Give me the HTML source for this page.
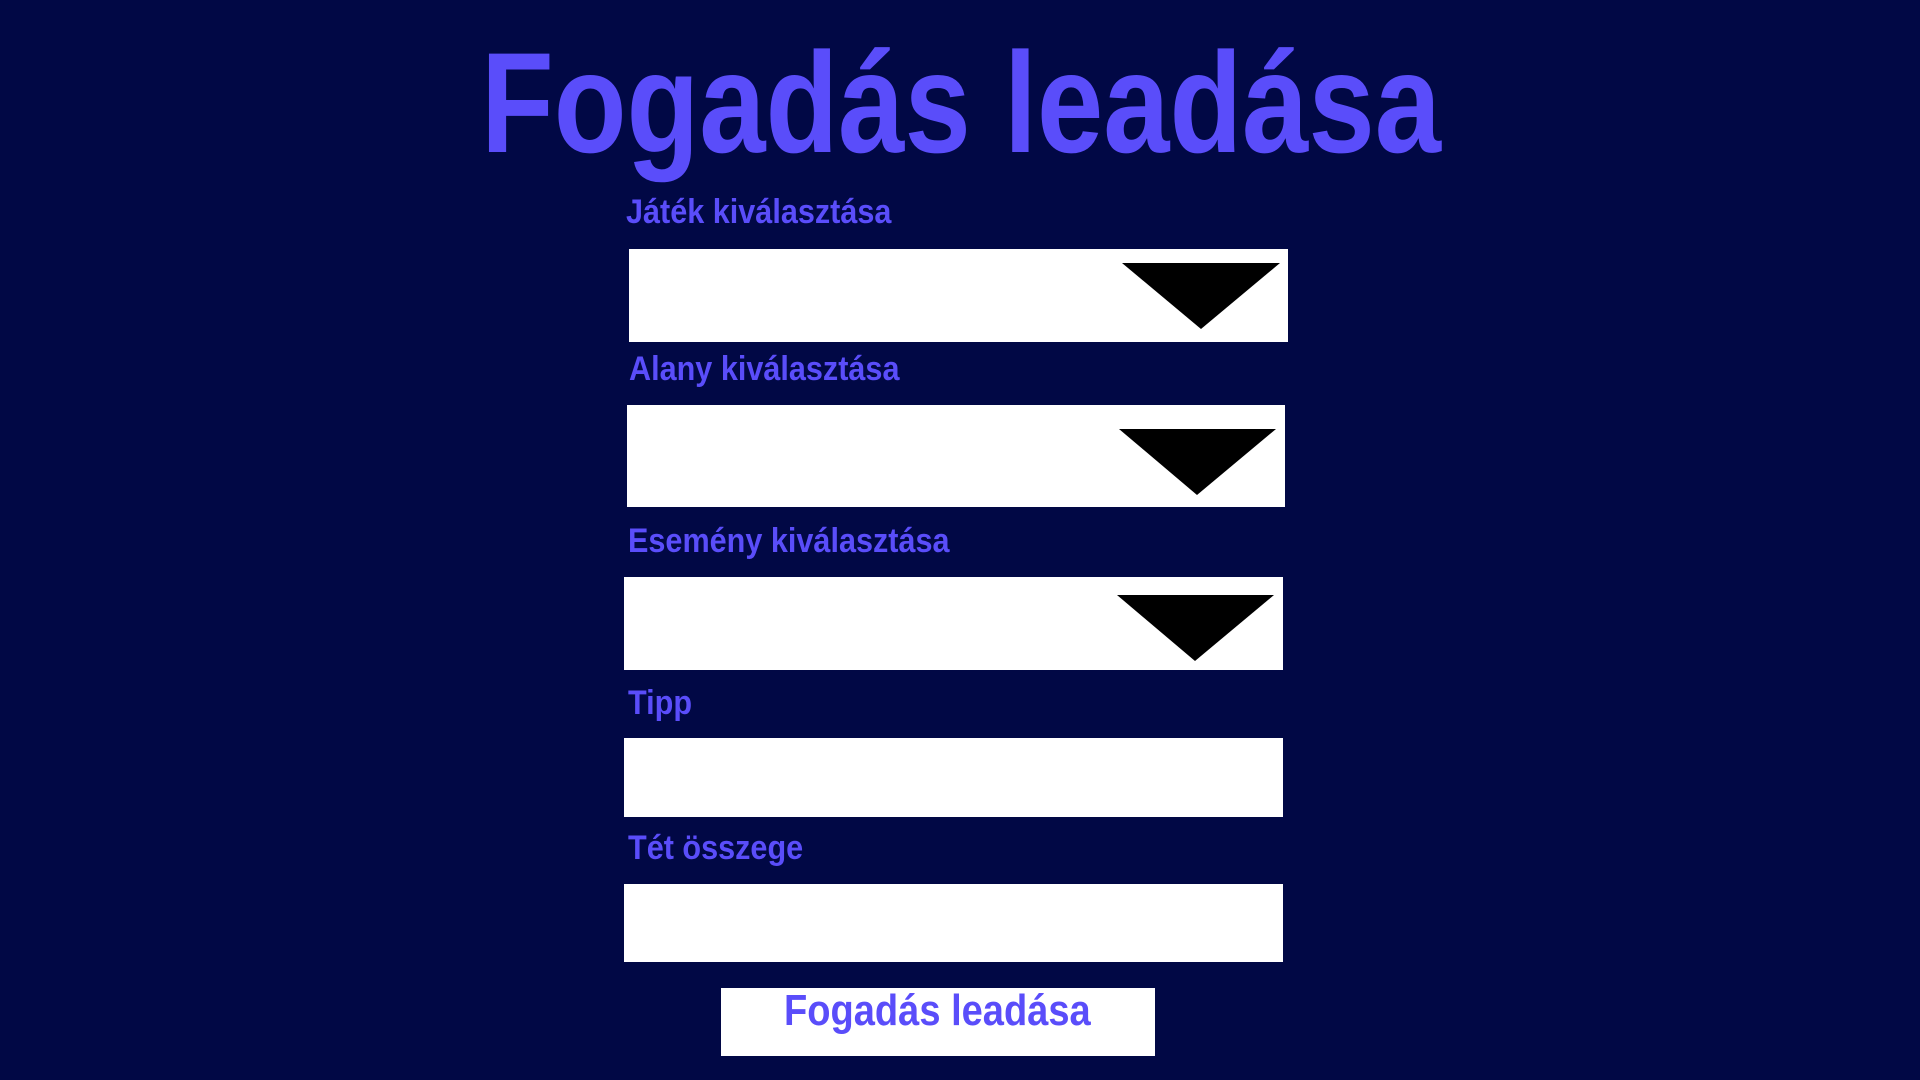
<!DOCTYPE html>
<html><head><meta charset="utf-8"><style>
html,body{margin:0;padding:0;width:1920px;height:1080px;background:#010845;overflow:hidden;font-family:"Liberation Sans",sans-serif;}
.t{position:absolute;color:#5a4dfa;font-weight:bold;white-space:nowrap;transform-origin:0 0;}
.l{font-size:34px;line-height:38px;transform:scaleX(0.9);}
.box{position:absolute;background:#fff;}
.tri{position:absolute;}
</style></head><body>
<div class="t" style="left:481px;top:32px;font-size:143px;line-height:143px;transform:scaleX(0.833);">Fogadás leadása</div>
<div class="t l" style="left:626px;top:193px;">Játék kiválasztása</div>
<div class="box" style="left:629px;top:249px;width:659px;height:93px;"></div>
<svg class="tri" style="left:1122px;top:263px" width="158" height="66"><polygon points="0,0 158,0 79,66" fill="#000"/></svg>
<div class="t l" style="left:629px;top:350px;">Alany kiválasztása</div>
<div class="box" style="left:627px;top:405px;width:658px;height:102px;"></div>
<svg class="tri" style="left:1119px;top:429px" width="157" height="66"><polygon points="0,0 157,0 78,66" fill="#000"/></svg>
<div class="t l" style="left:628px;top:522px;">Esemény kiválasztása</div>
<div class="box" style="left:624px;top:577px;width:659px;height:93px;"></div>
<svg class="tri" style="left:1117px;top:595px" width="157" height="66"><polygon points="0,0 157,0 78,66" fill="#000"/></svg>
<div class="t l" style="left:628px;top:684px;">Tipp</div>
<div class="box" style="left:624px;top:738px;width:659px;height:79px;"></div>
<div class="t l" style="left:628px;top:829px;">Tét összege</div>
<div class="box" style="left:624px;top:884px;width:659px;height:78px;"></div>
<div class="box" style="left:721px;top:988px;width:434px;height:68px;"></div>
<div class="t" style="left:784px;top:987px;font-size:44px;line-height:48px;transform:scaleX(0.865);">Fogadás leadása</div>
</body></html>
